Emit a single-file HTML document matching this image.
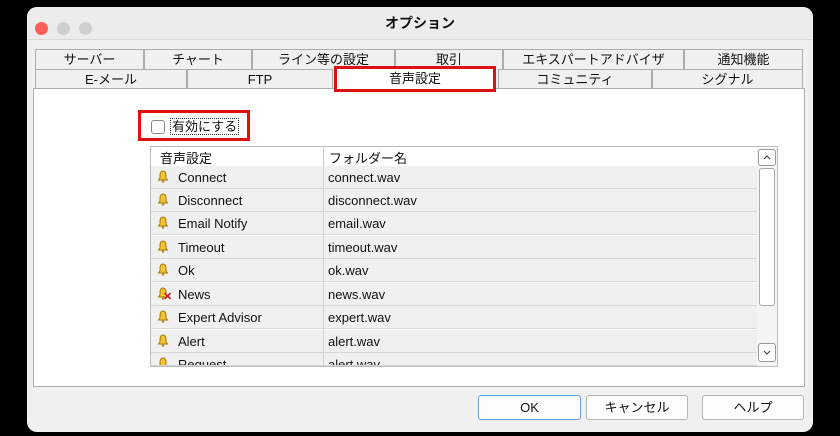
<!DOCTYPE html><html><head><meta charset="utf-8"><style>
*{margin:0;padding:0;box-sizing:border-box}
body{width:840px;height:436px;background:#000;position:relative;overflow:hidden;font-family:"Liberation Sans","Noto Sans CJK JP",sans-serif;font-size:13px;color:#111}
.a{position:absolute}
.win{left:27px;top:7px;width:786px;height:425px;background:#f0f0f0;border-radius:10px;overflow:hidden}
.tb{left:0;top:0;width:786px;height:33px;background:#ececec;border-bottom:1px solid #d8d8d8}
.dot{width:13px;height:13px;border-radius:50%;top:15px}
.tab{height:20px;background:#f0f0f0;border:1px solid #adadad;border-bottom:none;text-align:center;line-height:19px;font-size:13px}
.row{left:151px;width:606px;height:23px;background:#f0f0f0;border-bottom:1px solid #d6d6d6}
.row span{position:absolute;top:4px}
.bell{position:absolute;left:6px;top:4px;width:12px;height:13px}
.btn{top:395px;height:25px;background:#fdfdfd;border:1px solid #b5b5b5;border-radius:3px;text-align:center;line-height:23px}
</style></head><body>
<div class="a win">
<div class="a tb"></div>
<div class="a dot" style="left:8px;background:#fe5f57"></div>
<div class="a dot" style="left:30px;background:#cfcfcf"></div>
<div class="a dot" style="left:52px;background:#cfcfcf"></div>
<div class="a" style="left:0;width:786px;top:6px;text-align:center;font-size:14px;font-weight:bold">オプション</div>
</div>
<div class="a tab" style="left:35px;top:49px;width:109px">サーバー</div>
<div class="a tab" style="left:144px;top:49px;width:108px">チャート</div>
<div class="a tab" style="left:252px;top:49px;width:143px">ライン等の設定</div>
<div class="a tab" style="left:395px;top:49px;width:108px">取引</div>
<div class="a tab" style="left:503px;top:49px;width:181px">エキスパートアドバイザ</div>
<div class="a tab" style="left:684px;top:49px;width:119px">通知機能</div>
<div class="a tab" style="left:35px;top:69px;width:152px">E-メール</div>
<div class="a tab" style="left:187px;top:69px;width:146px">FTP</div>
<div class="a tab" style="left:498px;top:69px;width:154px">コミュニティ</div>
<div class="a tab" style="left:652px;top:69px;width:151px">シグナル</div>
<div class="a" style="left:33px;top:88px;width:772px;height:299px;background:#fff;border:1px solid #adadad"></div>
<div class="a" style="left:334px;top:66px;width:162px;height:26px;background:#fff;border:3px solid #e01010;text-align:center;line-height:19px">音声設定</div>
<div class="a" style="left:138px;top:110px;width:112px;height:31px;border:3px solid #e01010"></div>
<div class="a" style="left:151px;top:120px;width:14px;height:14px;border:1px solid #888;border-radius:3px;background:#fff"></div>
<div class="a" style="left:170px;top:118px;border:1px dotted #333;padding:0 1px;line-height:15px">有効にする</div>
<div class="a" style="left:150px;top:146px;width:628px;height:221px;border:1px solid #bbb;background:#fff;overflow:hidden"></div>
<div class="a" style="left:160px;top:148px">音声設定</div>
<div class="a" style="left:323px;top:146px;width:1px;height:20px;background:#ccc"></div>
<div class="a" style="left:329px;top:148px">フォルダー名</div>
<div class="a" style="left:757px;top:148px;width:20px;height:218px;background:#f4f4f4"></div>
<div class="a" style="left:758px;top:149px;width:18px;height:17px;border:1px solid #999;border-radius:3px;background:#fff"><svg width="16" height="15" style="position:absolute;left:0;top:0"><path d="M5 9L8 6L11 9" fill="none" stroke="#333" stroke-width="1"/></svg></div>
<div class="a" style="left:759px;top:168px;width:16px;height:138px;border:1px solid #aaa;border-radius:3px;background:#fff"></div>
<div class="a" style="left:758px;top:343px;width:18px;height:19px;border:1px solid #999;border-radius:3px;background:#fff"><svg width="16" height="17" style="position:absolute;left:0;top:0"><path d="M5 7L8 10L11 7" fill="none" stroke="#333" stroke-width="1"/></svg></div>
<svg width="0" height="0" style="position:absolute"><defs><symbol id="b" viewBox="0 0 12 13"><path d="M6 1C3.5 1 3 3 3 5.5V8L1.5 10H10.5L9 8V5.5C9 3 8.5 1 6 1Z" fill="#f4c430" stroke="#a07810" stroke-width="1"/><circle cx="6" cy="11.5" r="1.3" fill="#c09020"/></symbol></defs></svg>
<div class="a row" style="top:166px"><svg class="bell"><use href="#b"/></svg><span style="left:27px">Connect</span><span style="left:177px">connect.wav</span></div>
<div class="a row" style="top:189px"><svg class="bell"><use href="#b"/></svg><span style="left:27px">Disconnect</span><span style="left:177px">disconnect.wav</span></div>
<div class="a row" style="top:212px"><svg class="bell"><use href="#b"/></svg><span style="left:27px">Email Notify</span><span style="left:177px">email.wav</span></div>
<div class="a row" style="top:236px"><svg class="bell"><use href="#b"/></svg><span style="left:27px">Timeout</span><span style="left:177px">timeout.wav</span></div>
<div class="a row" style="top:259px"><svg class="bell"><use href="#b"/></svg><span style="left:27px">Ok</span><span style="left:177px">ok.wav</span></div>
<div class="a row" style="top:283px"><svg class="bell"><use href="#b"/></svg><span style="left:12px;top:7px;color:#d01010;font-weight:bold;font-size:11px">✕</span><span style="left:27px">News</span><span style="left:177px">news.wav</span></div>
<div class="a row" style="top:306px"><svg class="bell"><use href="#b"/></svg><span style="left:27px">Expert Advisor</span><span style="left:177px">expert.wav</span></div>
<div class="a row" style="top:330px"><svg class="bell"><use href="#b"/></svg><span style="left:27px">Alert</span><span style="left:177px">alert.wav</span></div>
<div class="a row" style="top:353px;height:13px;overflow:hidden"><svg class="bell"><use href="#b"/></svg><span style="left:27px">Request</span><span style="left:177px">alert.wav</span></div>
<div class="a" style="left:323px;top:166px;width:1px;height:200px;background:#d0d0d0"></div>
<div class="a btn" style="left:478px;width:103px;border-color:#6aa0d8">OK</div>
<div class="a btn" style="left:586px;width:102px">キャンセル</div>
<div class="a btn" style="left:702px;width:102px">ヘルプ</div>
</body></html>
